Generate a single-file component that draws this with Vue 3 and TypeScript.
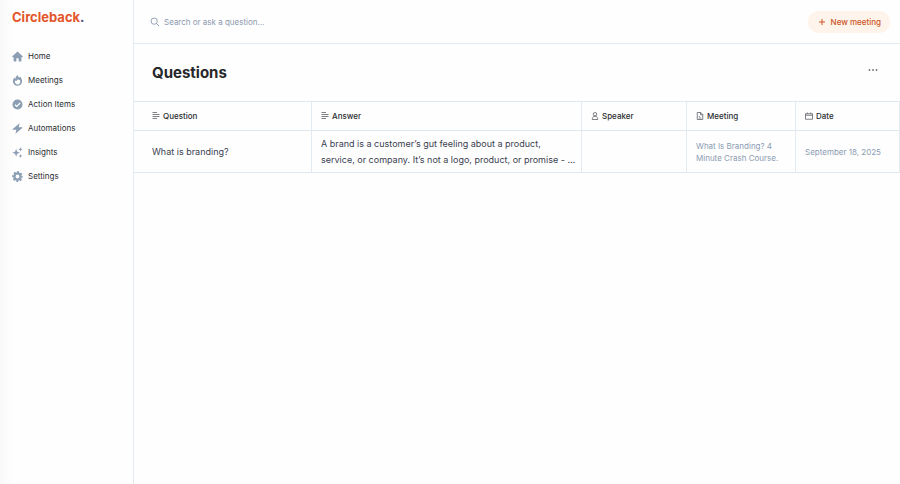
<script setup lang="ts">
import { ref } from 'vue'

interface NavItem {
  label: string
  icon: string
}

interface Column {
  key: string
  label: string
  icon: string
}

interface Row {
  question: string
  answer: string[]
  speaker: string
  meeting: string
  date: string
}

const query = ref('')

const navItems: NavItem[] = [
  { label: 'Home', icon: 'home' },
  { label: 'Meetings', icon: 'flame' },
  { label: 'Action Items', icon: 'check' },
  { label: 'Automations', icon: 'bolt' },
  { label: 'Insights', icon: 'sparkles' },
  { label: 'Settings', icon: 'gear' },
]

const columns: Column[] = [
  { key: 'question', label: 'Question', icon: 'text' },
  { key: 'answer', label: 'Answer', icon: 'text' },
  { key: 'speaker', label: 'Speaker', icon: 'person' },
  { key: 'meeting', label: 'Meeting', icon: 'document' },
  { key: 'date', label: 'Date', icon: 'calendar' },
]

const rows: Row[] = [
  {
    question: 'What is branding?',
    answer: [
      'A brand is a customer’s gut feeling about a product,',
      'service, or company. It’s not a logo, product, or promise - …',
    ],
    speaker: '',
    meeting: 'What Is Branding? 4 Minute Crash Course.',
    date: 'September 18, 2025',
  },
]
</script>

<template>
  <div class="app">
    <aside class="sidebar">
      <a href="#" class="logo">Circleback<span class="dot">.</span></a>
      <nav class="nav">
        <a v-for="item in navItems" :key="item.label" href="#" class="nav-link">
          <svg class="nav-icon" viewBox="0 0 24 24" aria-hidden="true">
            <path v-if="item.icon === 'home'" d="M12 1 .8 11.500c-.8.8-.3 2 .8 2H3.500V21.500A1.500 1.500 0 0 0 5 23H9.500V16h5v7H19a1.500 1.500 0 0 0 1.500-1.500v-8h1.900c1.100 0 1.600-1.200.8-2Z" />
            <path v-else-if="item.icon === 'flame'" fill-rule="evenodd" d="M12.500 0c.3 3 1.800 4.500 3.300 5.800.8-.7 1.200-1.500 1.400-2.500C20.500 6 22 10 22 13.500a10 10 0 0 1-20 0c0-3.200 1.200-6 3.300-8.200.3 1.600.9 2.500 1.900 3.300C7.500 5 9.500 2 12.500 0Zm.3 8.500c-1 2.500-2.300 3.800-3.800 4.500-.9-.2-1.500-.7-2-1.500A6 6 0 1 0 17 11c-1.900.2-3.500-.7-4.200-2.500Z" />
            <path v-else-if="item.icon === 'check'" fill-rule="evenodd" d="M12 1a11 11 0 1 1 0 22 11 11 0 0 1 0-22Zm4.800 6.800-6.300 6.600-3.200-3-1.800 2 5.100 4.700 8.100-8.500Z" />
            <path v-else-if="item.icon === 'bolt'" d="M16.500.5 1.500 13c-.6.600-.3 1.500.6 1.500h7.400L7.500 23.500 22.500 11c.6-.6.300-1.500-.6-1.500h-7.400Z" />
            <path v-else-if="item.icon === 'sparkles'" d="m9 4 2.300 6.200L17.500 12.500l-6.200 2.300L9 21l-2.300-6.200L.5 12.500l6.200-2.300ZM18.500 0l1.300 3.700L23.500 5l-3.700 1.300-1.300 3.700-1.300-3.700L13.500 5l3.700-1.300Zm0 15 1.200 3.300L23 19.500l-3.300 1.200L18.500 24l-1.200-3.300L14 19.500l3.300-1.200Z" />
            <g v-else class="gear">
              <circle cx="12" cy="12" r="6.800" stroke-width="5" />
              <circle cx="12" cy="12" r="10" stroke-width="3.500" stroke-dasharray="4.400 3.454" stroke-dashoffset="2.200" />
            </g>
          </svg>
          {{ item.label }}
        </a>
      </nav>
    </aside>

    <main class="main">
      <header class="topbar">
        <label class="search">
          <svg class="search-icon" viewBox="0 0 24 24" aria-hidden="true">
            <circle cx="10" cy="10" r="7.500" />
            <path d="m15.500 15.500 6.500 6.500" />
          </svg>
          <input v-model="query" class="search-input" type="text" aria-label="Search" placeholder="Search or ask a question…" />
        </label>
        <button type="button" class="new-meeting">
          <svg class="plus" viewBox="0 0 8 8" aria-hidden="true"><path d="M4 1v6M1 4h6" /></svg>
          New meeting
        </button>
      </header>

      <section class="heading">
        <h1 class="title">Questions</h1>
        <button type="button" class="more" aria-label="More options">
          <svg viewBox="0 0 10 4" aria-hidden="true">
            <circle cx="1.500" cy="2" r="0.900" />
            <circle cx="5" cy="2" r="0.900" />
            <circle cx="8.500" cy="2" r="0.900" />
          </svg>
        </button>
      </section>

      <table class="table">
        <colgroup>
          <col v-for="column in columns" :key="column.key" :class="`col-${column.key}`" />
        </colgroup>
        <thead>
          <tr>
            <th v-for="column in columns" :key="column.key" scope="col">
              <span class="head">
                <svg class="head-icon" viewBox="0 0 16 16" aria-hidden="true">
                  <path v-if="column.icon === 'text'" d="M1 1h9M1 5h14M1 9h14M1 13h9" />
                  <template v-else-if="column.icon === 'person'">
                    <circle cx="8" cy="4.500" r="3.500" />
                    <path d="M6 8.500h4c2 1 3.500 3.500 3.500 6.500h-11c0-3 1.500-5.500 3.500-6.500Z" />
                  </template>
                  <path v-else-if="column.icon === 'document'" d="M2.500 1h7l4 4v10h-11ZM9 1v4.500h4.500M5.500 9h2M5.500 12h5" />
                  <path v-else d="M1 3.500h14V14.500H1ZM1 6.500h14M4.500 1v2.500M11.500 1v2.500" />
                </svg>
                {{ column.label }}
              </span>
            </th>
          </tr>
        </thead>
        <tbody>
          <tr v-for="row in rows" :key="row.question">
            <td class="question">{{ row.question }}</td>
            <td class="answer">
              <span v-for="line in row.answer" :key="line" class="answer-line">{{ line }}</span>
            </td>
            <td>{{ row.speaker }}</td>
            <td class="muted">{{ row.meeting }}</td>
            <td class="muted">{{ row.date }}</td>
          </tr>
        </tbody>
      </table>
    </main>
  </div>
</template>

<style>
body {
  background: #fefefe;
}
</style>

<style scoped>
.app {
  display: flex;
  min-height: 100vh;
  font-family: Inter, 'Liberation Sans', sans-serif;
  font-size: 8px;
  color: #2b2d31;
  background: #fefefe;
}

.app * {
  box-sizing: border-box;
}

.sidebar {
  flex: none;
  width: 134px;
  padding: 7px 12px;
  border-right: 1px solid #e3eaf1;
  background: linear-gradient(to right, #f9f9fa, #fefefe 14px);
}

.logo {
  display: block;
  line-height: 20px;
  font-size: 13px;
  font-weight: 700;
  color: #e3562a;
  text-decoration: none;
}

.dot {
  color: #4c5380;
}

.nav {
  display: flex;
  flex-direction: column;
  margin-top: 17px;
}

.nav-link {
  display: flex;
  align-items: center;
  gap: 5px;
  height: 24px;
  color: #2b2d31;
  text-decoration: none;
}

.nav-icon {
  width: 11px;
  height: 11px;
  fill: #8b9eb3;
}

.gear {
  fill: none;
  stroke: #8b9eb3;
}

.main {
  flex: 1;
  min-width: 0;
}

.topbar {
  display: flex;
  align-items: center;
  justify-content: space-between;
  height: 44px;
  padding: 0 10px 0 16px;
  border-bottom: 1px solid #e3eaf1;
}

.search {
  display: flex;
  flex: 1;
  align-items: center;
  gap: 4px;
}

.search-icon {
  width: 10px;
  height: 10px;
  fill: none;
  stroke: #8494aa;
  stroke-width: 2;
}

.search-input {
  flex: 1;
  min-width: 0;
  padding: 0;
  border: 0;
  outline: 0;
  font: inherit;
  color: #2b2d31;
  background: transparent;
}

.search-input::placeholder {
  color: #8b99ae;
  opacity: 1;
}

.new-meeting {
  display: flex;
  align-items: center;
  gap: 5px;
  height: 22px;
  padding: 0 9px 0 10px;
  border: 0;
  border-radius: 11px;
  font: inherit;
  font-weight: 500;
  color: #cb5526;
  background: #fff4eb;
}

.plus {
  width: 8px;
  height: 8px;
  fill: none;
  stroke: #cb5526;
  stroke-width: 1;
}

.heading {
  display: flex;
  align-items: center;
  justify-content: space-between;
  height: 57px;
  padding: 0 22px 0 18px;
}

.title {
  margin: 0;
  font-size: 15px;
  font-weight: 700;
  line-height: 20px;
  color: #26272a;
}

.more {
  display: flex;
  padding: 0 0 6px;
  border: 0;
  background: transparent;
}

.more svg {
  width: 10px;
  height: 4px;
  fill: #6c7078;
}

.table {
  width: 100%;
  table-layout: fixed;
  border-collapse: separate;
  border-spacing: 0;
  border-top: 1px solid #dfe8ee;
}

.col-question {
  width: 178px;
}

.col-speaker {
  width: 105px;
}

.col-meeting {
  width: 109px;
}

.col-date {
  width: 104px;
}

th,
td {
  padding: 0 4px 0 9px;
  border-right: 1px solid #e3eaf1;
  border-bottom: 1px solid #dfe8ee;
  text-align: left;
  vertical-align: middle;
}

th:first-child,
td:first-child {
  padding-left: 18px;
}

th {
  height: 29px;
  font-weight: 500;
}

td {
  height: 42px;
  line-height: 12px;
}

.head {
  display: flex;
  align-items: center;
  gap: 3px;
}

.head-icon {
  width: 8px;
  height: 8px;
  fill: none;
  stroke: #54575d;
  stroke-width: 1.5;
}

.question,
.answer {
  font-size: 9px;
  line-height: 16px;
  color: #3a4150;
}

.answer-line {
  display: block;
  white-space: nowrap;
}

.muted {
  color: #8b9bb2;
}
</style>
